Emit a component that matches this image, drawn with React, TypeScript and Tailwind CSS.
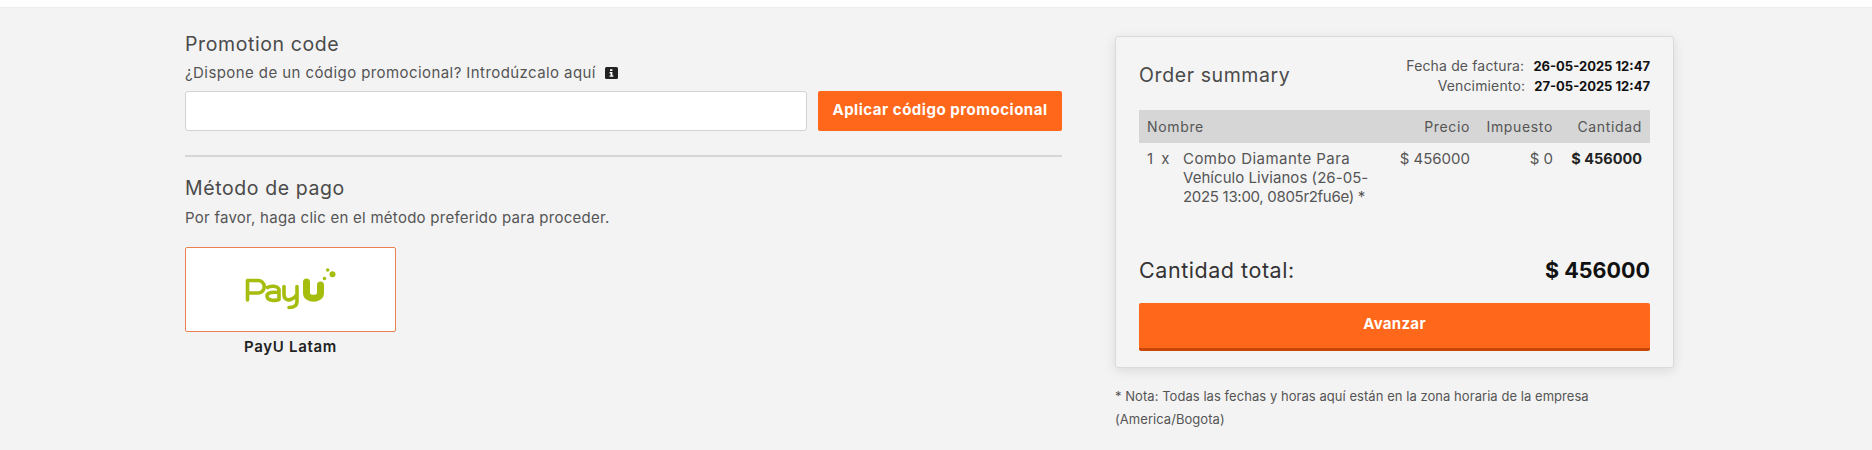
export default function App() {
  return (
    <div className="w-[1872px] h-[450px] overflow-hidden bg-[#f3f3f3] [font-family:Inter,sans-serif] text-[#555]">
      <div className="h-[8px] bg-white border-b border-[#ececec]" />
      <div className="flex pl-[185px] gap-[53px]">
        <div className="w-[877px] pt-[24px]">
          <h2 className="text-[19.5px] leading-[24px] text-[#4a4a4a] font-normal tracking-[0.6px]">Promotion code</h2>
          <div className="mt-[7px] flex items-center gap-[9px] text-[15px] leading-[20px] tracking-[0.42px]">
            <span>¿Dispone de un código promocional? Introdúzcalo aquí</span>
            <svg width="13" height="12" viewBox="0 0 13 12">
              <rect width="13" height="12" rx="1.5" fill="#222" />
              <path d="M5 2.200h2.400v1.800H5zM4.600 5h2.800v3.400h1v1.400H4.600V8.400h1V6.400h-1z" fill="#fff" />
            </svg>
          </div>
          <div className="mt-[8px] flex gap-[11px]">
            <input className="w-[622px] h-[40px] bg-white border border-[#d2d2d2] rounded-[3px]" />
            <button className="w-[244px] h-[40px] pb-[1px] bg-[#ff671b] rounded-[2px] text-white text-[15px] font-bold tracking-[0.53px]">
              Aplicar código promocional
            </button>
          </div>
          <div className="mt-[24px] border-t-2 border-[#d6d6d6]" />
          <h2 className="mt-[19px] text-[19.5px] leading-[24px] text-[#4a4a4a] font-normal tracking-[0.6px]">Método de pago</h2>
          <p className="mt-[8px] text-[15px] leading-[20px] tracking-[0.26px]">Por favor, haga clic en el método preferido para proceder.</p>
          <div className="mt-[19px] w-[211px]">
            <div className="h-[85px] bg-white border border-[#e9804e] rounded-[2px] flex items-center justify-center">
              <svg width="120" height="70" viewBox="0 0 120 70" fill="none" stroke="#a6bd0e" strokeLinecap="round" strokeLinejoin="round">
                <path d="M16.500 45V25.500H27a6 6 0 0 1 0 12.500H16.500" strokeWidth="3.600" />
                <path d="M36.500 32.500c2-1.500 10-2.500 11.500 2v10c-3 1.200-12 1.800-12-3.500 0-4 7-4 12-3.500" strokeWidth="3.600" />
                <path d="M53 31.500v8c0 5 4 6 6.500 5s5-2 5.500-4M66 31.500v15c0 5-4 6-8 6" strokeWidth="3.600" />
                <path d="M75.500 27v11c0 7 14 7 14 0v-8" strokeWidth="7" />
                <circle cx="101.500" cy="19.300" r="3" fill="#a6bd0e" stroke="none" />
                <circle cx="96.700" cy="15" r="1.800" fill="#a6bd0e" stroke="none" />
                <circle cx="93.500" cy="23.500" r="1.800" fill="#a6bd0e" stroke="none" />
              </svg>
            </div>
            <div className="mt-[5px] text-center text-[15px] leading-[20px] font-semibold text-[#222] tracking-[0.7px]">PayU Latam</div>
          </div>
        </div>
        <div className="w-[559px] pt-[28px]">
          <div className="h-[332px] border border-[#dadada] rounded-[3px] bg-[#f4f4f4] shadow-[0_3px_12px_rgba(0,0,0,0.1)] px-[23px] pt-[18px]">
            <div className="flex justify-between items-center h-[41px]">
              <h2 className="text-[19.5px] text-[#4a4a4a] font-normal tracking-[0.6px]">Order summary</h2>
              <div className="text-[14px] leading-[20px] text-right tracking-[0.15px]">
                <div>Fecha de factura: <b className="ml-[5px] font-bold text-[#111] text-[13px] tracking-normal">26-05-2025 12:47</b></div>
                <div>Vencimiento: <b className="ml-[5px] font-bold text-[#111] text-[13px] tracking-normal">27-05-2025 12:47</b></div>
              </div>
            </div>
            <div className="mt-[14px] h-[33px] bg-[#d6d6d6] px-[8px] grid grid-cols-[233px_90px_83px_89px] items-center text-[14px] tracking-[0.65px]">
              <div>Nombre</div>
              <div className="text-right">Precio</div>
              <div className="text-right">Impuesto</div>
              <div className="text-right">Cantidad</div>
            </div>
            <div className="mt-[6px] px-[8px] grid grid-cols-[36px_197px_90px_83px_89px] text-[15px] leading-[19px]">
              <div className="[word-spacing:4px]">1 x</div>
              <div className="whitespace-nowrap">
                <div className="tracking-[0.45px]">Combo Diamante Para</div>
                <div className="tracking-[0.05px]">Vehículo Livianos (26-05-</div>
                <div className="tracking-[-0.3px]">2025 13:00, 0805r2fu6e) *</div>
              </div>
              <div className="text-right">$ 456000</div>
              <div className="text-right">$ 0</div>
              <div className="text-right font-bold text-[#222] text-[14.5px]">$ 456000</div>
            </div>
            <div className="mt-[50px] flex justify-between items-center h-[28px]">
              <span className="text-[21.5px] text-[#333] tracking-[0.55px]">Cantidad total:</span>
              <span className="text-[21.5px] font-bold text-[#111]">$ 456000</span>
            </div>
            <button className="mt-[19px] w-full h-[48px] pb-[3px] bg-[#ff671b] border-b-[3px] border-[#c84708] rounded-[2px] text-white text-[15px] font-bold tracking-[0.3px]">
              Avanzar
            </button>
          </div>
          <p className="mt-[17px] text-[13px] leading-[23px] text-[#555] tracking-[0.05px]">
            * Nota: Todas las fechas y horas aquí están en la zona horaria de la empresa<br />(America/Bogota)
          </p>
        </div>
      </div>
    </div>
  );
}
